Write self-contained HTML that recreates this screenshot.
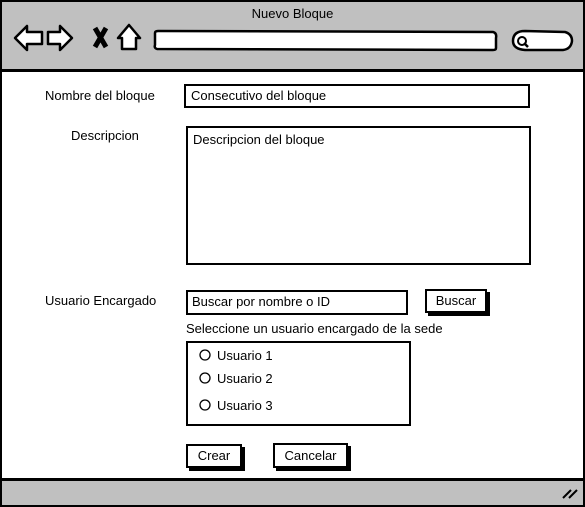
<!DOCTYPE html>
<html><head><style>
body{margin:0;width:585px;height:507px;overflow:hidden;background:#fff;font-family:"Liberation Sans",sans-serif;font-size:13px;color:#000}
.a{position:absolute;box-sizing:border-box}
.box{border:2px solid #000;background:#fff}
.btn{border:2px solid #000;background:#fff;box-shadow:3px 3px 0 #000;text-align:center}
.t{position:absolute;white-space:nowrap}
</style></head><body>
<div class="a" style="left:0;top:0;width:585px;height:507px;border:2px solid #000"></div>
<div class="a" style="left:2px;top:2px;width:581px;height:70px;background:#c0c0c0;border-bottom:3px solid #000"></div>
<div class="t" style="left:0;width:585px;text-align:center;top:6px">Nuevo Bloque</div>
<svg class="a" style="left:0;top:0" width="585" height="75">
<g fill="#fff" stroke="#000" stroke-width="2.5" stroke-linejoin="round">
<path d="M15 38 L27 26 L27 32 L42 32 L42 44 L27 44 L27 50 Z"/>
<path d="M72 38 L60 26 L60 32 L48 32 L48 44 L60 44 L60 50 Z"/>
<path d="M118 38 L129 25 L140 38 L136 38 L136 49 L122 49 L122 38 Z"/>
<path d="M155 33 Q155 31 158 31 L493 32 Q497 33 496 38 L496 48 Q496 50 493 50 L157 49 Q154 48 155 45 Z"/>
<path d="M525 31 L565 32 Q572 34 572 41 Q571 49 563 50 L525 50 Q513 49 513 41 Q513 31 525 31 Z"/>
</g>
<path d="M95 28 L106 47 M106 28 L95 47" stroke="#000" stroke-width="5" fill="none"/>
<circle cx="522" cy="41" r="4" fill="none" stroke="#000" stroke-width="2"/>
<path d="M524 43 L528 47" stroke="#000" stroke-width="2.5"/>
</svg>
<div class="t" style="left:45px;top:88px">Nombre del bloque</div>
<div class="a box" style="left:184px;top:84px;width:346px;height:24px"></div>
<div class="t" style="left:191px;top:88px">Consecutivo del bloque</div>
<div class="t" style="left:71px;top:128px">Descripcion</div>
<div class="a box" style="left:186px;top:126px;width:345px;height:139px"></div>
<div class="t" style="left:193px;top:132px">Descripcion del bloque</div>
<div class="t" style="left:45px;top:293px">Usuario Encargado</div>
<div class="a box" style="left:186px;top:290px;width:222px;height:25px"></div>
<div class="t" style="left:192px;top:294px">Buscar por nombre o ID</div>
<div class="a btn" style="left:425px;top:289px;width:62px;height:24px;line-height:20px">Buscar</div>
<div class="t" style="left:186px;top:321px">Seleccione un usuario encargado de la sede</div>
<div class="a box" style="left:186px;top:341px;width:225px;height:85px"></div>
<svg class="a" style="left:0;top:0" width="585" height="507"><g fill="#fff" stroke="#000" stroke-width="1.3"><circle cx="205" cy="355" r="5"/><circle cx="205" cy="378" r="5"/><circle cx="205" cy="405" r="5"/></g></svg>
<div class="t" style="left:217px;top:348px">Usuario 1</div>
<div class="t" style="left:217px;top:371px">Usuario 2</div>
<div class="t" style="left:217px;top:398px">Usuario 3</div>
<div class="a btn" style="left:186px;top:444px;width:56px;height:24px;line-height:20px">Crear</div>
<div class="a btn" style="left:273px;top:443px;width:75px;height:25px;line-height:21px">Cancelar</div>
<div class="a" style="left:2px;top:478px;width:581px;height:27px;background:#c0c0c0;border-top:3px solid #000"></div>
<svg class="a" style="left:560px;top:485px" width="20" height="16"><path d="M3 13 L11 5 M9 13 L17 5" stroke="#000" stroke-width="2"/></svg>
</body></html>
